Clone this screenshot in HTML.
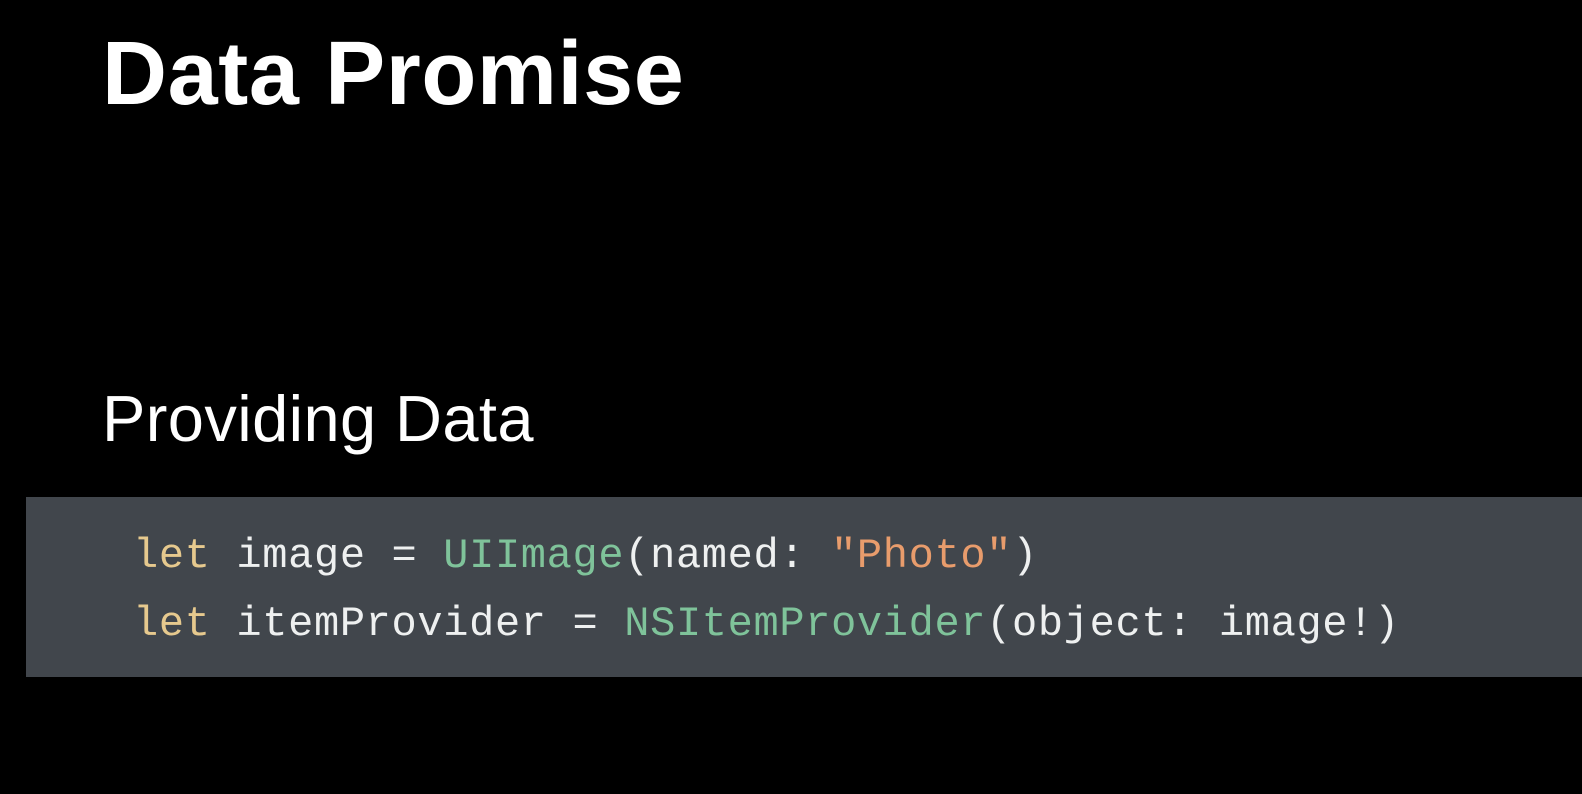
<!DOCTYPE html>
<html><head><meta charset="utf-8"><style>
html,body{margin:0;padding:0;background:#000;width:1582px;height:794px;overflow:hidden;position:relative}
.t{position:absolute;left:102px;color:#fff;font-family:"Liberation Sans",sans-serif;white-space:nowrap;line-height:1}
#h{font-weight:bold;font-size:90px;top:29px;letter-spacing:0.6px}
#s{font-size:65px;top:386px;letter-spacing:0.4px}
#box{position:absolute;left:26px;top:497px;width:1556px;height:180px;background:#41464c}
.c{position:absolute;left:133px;font-family:"Liberation Mono",monospace;font-size:42px;letter-spacing:0.65px;color:#eef0f0;white-space:pre;line-height:1}
.k{color:#e6c98e}.g{color:#7fc39a}.o{color:#e89c6c}
</style></head><body>
<div class="t" id="h">Data Promise</div>
<div class="t" id="s">Providing Data</div>
<div id="box"></div>
<div class="c" style="top:535px"><span class="k">let</span> image = <span class="g">UIImage</span>(named: <span class="o">"Photo"</span>)</div>
<div class="c" style="top:603px"><span class="k">let</span> itemProvider = <span class="g">NSItemProvider</span>(object: image!)</div>
</body></html>
